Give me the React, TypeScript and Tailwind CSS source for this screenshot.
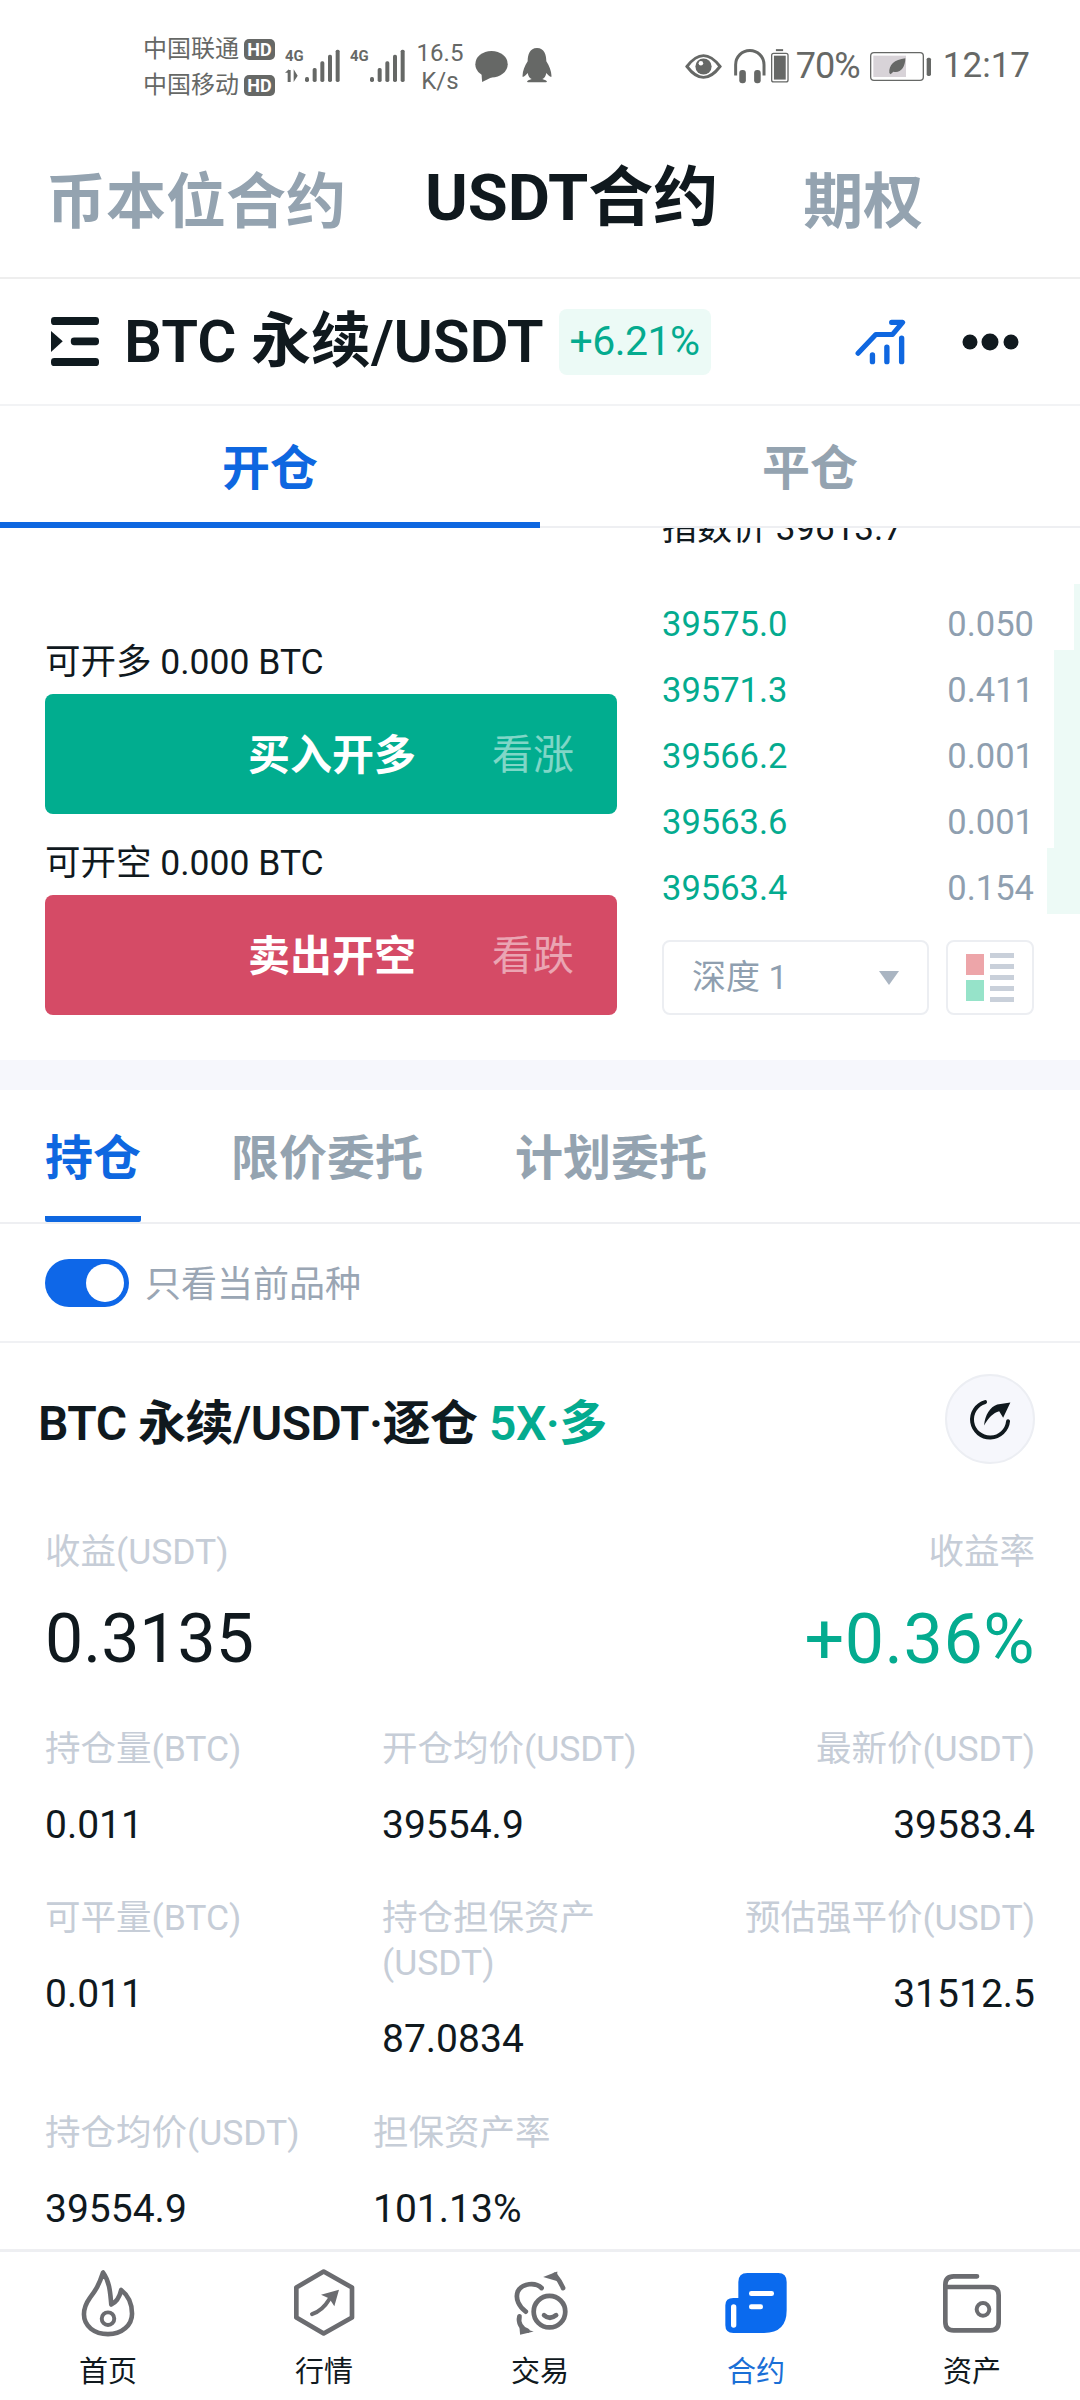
import * as React from "react";

const GREEN = "text-[#04ab8f]";

const orderRows = [
  { price: "39575.0", qty: "0.050", bar: "w-[6px]" },
  { price: "39571.3", qty: "0.411", bar: "w-[26px]" },
  { price: "39566.2", qty: "0.001", bar: "w-[26px]" },
  { price: "39563.6", qty: "0.001", bar: "w-[26px]" },
  { price: "39563.4", qty: "0.154", bar: "w-[33px]" },
];

function SignalBars({ x, dual }: { x: number; dual?: boolean }) {
  // drawn in 3x coordinates of the status bar
  const bars = [
    { dx: 0, h: 15 },
    { dx: 23, h: 42 },
    { dx: 46, h: 62 },
    { dx: 69, h: 82 },
    { dx: 92, h: 97 },
  ];
  return (
    <svg viewBox="0 0 165 105" className="w-[55px] h-[35px] shrink-0 fill-[#666866]">
      <text x="0" y="40" fontSize="46" fontWeight="700" textLength="56" lengthAdjust="spacingAndGlyphs" fontFamily="Roboto, sans-serif">
        4G
      </text>
      {dual && <path d="M8 66h9v36H8zM0 74l12-10v10zM26 64v38l12-19z" />}
      {bars.map((b) => (
        <rect key={b.dx} x={x + b.dx} y={102 - b.h} width="12" height={b.h} rx="5" />
      ))}
    </svg>
  );
}

function HdBadge() {
  return (
    <span className="w-[31px] h-[21px] rounded-[5px] bg-[#666866] text-white text-[18px] font-bold leading-[21px] text-center">
      HD
    </span>
  );
}

function StatusBar() {
  return (
    <div className="h-[120px] flex items-start pl-[143px] pr-[50px] pt-[30px] text-[#666866]">
      <div className="flex flex-col text-[24px] leading-[34px] gap-0">
        <div className="flex items-center gap-[5px] h-[38px]">
          中国联通 <HdBadge />
        </div>
        <div className="flex items-center gap-[5px] h-[34px]">
          中国移动 <HdBadge />
        </div>
      </div>
      <div className="ml-[10px] mt-[18px]">
        <SignalBars x={60} dual />
      </div>
      <div className="ml-[10px] mt-[18px]">
        <SignalBars x={60} />
      </div>
      <div className="ml-[13px] w-[44px] flex flex-col items-center text-[24px] leading-[28px] mt-[9px] whitespace-nowrap">
        <span>16.5</span>
        <span>K/s</span>
      </div>
      <svg viewBox="1065 90 105 100" className="ml-[13px] mt-[20px] w-[34px] h-[33px] fill-[#666866]">
        <ellipse cx="1116" cy="133" rx="50" ry="41" />
        <path d="M1085 160l2 28 36-18z" />
      </svg>
      <svg viewBox="1205 85 90 105" className="ml-[13px] mt-[18px] w-[30px] h-[35px] fill-[#666866]">
        <path d="M1250 85C1228 85 1222 105 1222 125C1212 140 1205 160 1207 172C1212 172 1218 165 1222 160C1224 170 1228 176 1234 178C1222 182 1215 186 1225 188L1275 188C1285 186 1278 182 1266 178C1272 176 1276 170 1278 160C1282 165 1288 172 1293 172C1295 160 1288 140 1278 125C1278 105 1272 85 1250 85Z" />
      </svg>

      <div className="ml-auto flex items-center h-[72px]">
        <svg viewBox="48 88 114 94" className="w-[37px] h-[31px]">
          <path d="M54 135Q105 68 156 135Q105 202 54 135Z" fill="none" stroke="#666866" strokeWidth="9" />
          <circle cx="105" cy="135" r="25" fill="#666866" />
          <circle cx="97" cy="125" r="7" fill="#fff" />
        </svg>
        <svg viewBox="190 85 100 105" className="ml-[11px] w-[33px] h-[35px]">
          <path d="M198 165V132A43 43 0 0 1 284 132V165" fill="none" stroke="#666866" strokeWidth="9" />
          <rect x="209" y="148" width="20" height="40" rx="9" fill="#666866" />
          <rect x="254" y="148" width="20" height="40" rx="9" fill="#666866" />
        </svg>
        <svg viewBox="305 85 55 103" className="ml-[5px] w-[18px] h-[34px]">
          <rect x="320" y="85" width="22" height="6" fill="#666866" />
          <rect x="307" y="98" width="50" height="87" rx="6" fill="none" stroke="#666866" strokeWidth="4" />
          <rect x="314" y="105" width="36" height="73" fill="#666866" />
        </svg>
        <span className="ml-[7px] text-[36px] leading-[40px] w-[64px] tracking-[-1px] whitespace-nowrap">70%</span>
        <svg viewBox="602 93 186 87" className="ml-[10px] w-[62px] h-[29px]">
          <rect x="604" y="95" width="158" height="83" rx="10" fill="none" stroke="#666866" strokeWidth="4" />
          <rect x="612" y="104" width="98" height="64" fill="#d8d3d8" />
          <path d="M660 156C658 132 675 116 708 112C708 140 692 158 672 152L664 160Z" fill="#666866" />
          <rect x="772" y="110" width="13" height="55" rx="5" fill="#666866" />
        </svg>
        <span className="ml-[11px] text-[35px] leading-[40px] whitespace-nowrap">12:17</span>
      </div>
    </div>
  );
}

function TopTabs() {
  return (
    <div className="h-[159px] border-b-2 border-[#eeeeee] flex items-center pl-[46px] pb-[2px] font-bold text-[60px] leading-[70px] text-[#94a3b0] whitespace-nowrap">
      <span className="mt-[10px]">币本位合约</span>
      <span className="ml-[79px] text-[#10191e] text-[65px] mt-[1px]">USDT合约</span>
      <span className="ml-[85px] mt-[10px]">期权</span>
    </div>
  );
}

function PairHeader() {
  return (
    <div className="h-[127px] border-b-2 border-[#f2f3f5] flex items-center pl-[51px] pr-[61px]">
      <svg viewBox="33 38 143 146" className="w-[48px] h-[49px] fill-[#0f1a1f]">
        <rect x="33" y="38" width="143" height="24" rx="10" />
        <rect x="92" y="99" width="84" height="23" rx="10" />
        <rect x="33" y="160" width="143" height="24" rx="10" />
        <path d="M33 80L68 110L33 142Z" />
      </svg>
      <span className="ml-[25px] text-[60px] leading-[70px] font-semibold text-[#10191e] whitespace-nowrap tracking-[-0.1px]">
        BTC 永续/USDT
      </span>
      <span className={`ml-[15px] w-[152px] h-[66px] rounded-[8px] bg-[#ecfaf6] flex items-center justify-center text-[41px] tracking-[-0.5px] ${GREEN}`}>
        +6.21%
      </span>
      <svg viewBox="30 25 155 140" className="ml-auto w-[52px] h-[47px] fill-none stroke-[#0f67e0]">
        <path d="M42 130L95 74H145L175 38H142" strokeWidth="15" strokeLinecap="round" strokeLinejoin="round" />
        <path d="M85 135V155M128 112V155M172 85V155" strokeWidth="16" strokeLinecap="round" />
      </svg>
      <svg viewBox="0 0 58 20" className="ml-[55px] w-[58px] h-[20px] fill-[#10191e]">
        <circle cx="9" cy="10" r="7.5" />
        <circle cx="29" cy="10" r="8.5" />
        <circle cx="50" cy="10" r="7.5" />
      </svg>
    </div>
  );
}

function OpenCloseTabs() {
  return (
    <div className="h-[122px] border-b-2 border-[#eeeff2] flex text-[48px] font-bold leading-[60px] relative">
      <div className="w-[540px] h-[122px] border-b-[6px] border-[#0e67e0] flex justify-center pt-[33px] text-[#0e67e0]">开仓</div>
      <div className="w-[540px] flex justify-center pt-[33px] text-[#94a3b0]">平仓</div>
    </div>
  );
}

function TradePanel() {
  return (
    <div className="h-[532px] flex overflow-hidden">
      <div className="w-[617px] pl-[45px]">
        <div className="mt-[112px] text-[35.5px] leading-[44px] text-[#10191e]">可开多 0.000 BTC</div>
        <div className="mt-[10px] h-[120px] rounded-[8px] bg-[#01ad8f] flex items-center pt-[3px] pl-[203px] text-white">
          <span className="text-[42px] font-bold">买入开多</span>
          <span className="ml-[76px] text-[41px] opacity-50">看涨</span>
        </div>
        <div className="mt-[27px] text-[35.5px] leading-[44px] text-[#10191e]">可开空 0.000 BTC</div>
        <div className="mt-[10px] h-[120px] rounded-[8px] bg-[#d54b66] flex items-center pt-[3px] pl-[203px] text-white">
          <span className="text-[42px] font-bold">卖出开空</span>
          <span className="ml-[76px] text-[41px] opacity-50">看跌</span>
        </div>
      </div>
      <div className="ml-[45px] w-[372px]">
        <div className="h-[18px] overflow-hidden">
          <div className="-mt-[17px] text-[35px] leading-[36px] text-[#10191e] whitespace-nowrap">指数价 39613.7</div>
        </div>
        <div className="mt-[46px]">
          {orderRows.map((r) => (
            <div key={r.price} className="relative h-[66px] flex items-center justify-between text-[34.5px]">
              <div className={`absolute -right-[46px] -top-[8px] h-[66px] bg-[#edfaf6] ${r.bar}`} />
              <span className={`relative ${GREEN}`}>{r.price}</span>
              <span className="relative text-[#8f9fb0]">{r.qty}</span>
            </div>
          ))}
        </div>
        <div className="mt-[18px] flex gap-[17px]">
          <div className="w-[267px] h-[75px] rounded-[8px] border-2 border-[#eceef2] flex items-center pl-[28px] pr-[28px] text-[34px] text-[#8f9fb0]">
            <span>深度 1</span>
            <span className="ml-auto w-0 h-0 border-x-[10px] border-x-transparent border-t-[14px] border-t-[#aab5c2]" />
          </div>
          <div className="w-[88px] h-[75px] rounded-[8px] border-2 border-[#eceef2] flex items-center pl-[18px] gap-[6px]">
            <div className="flex flex-col gap-[5px]">
              <div className="w-[18px] h-[21px] bg-[#eda5a9]" />
              <div className="w-[18px] h-[21px] bg-[#96e3c9]" />
            </div>
            <div className="flex flex-col gap-[6px]">
              <div className="w-[24px] h-[5px] bg-[#c9d0da]" />
              <div className="w-[24px] h-[5px] bg-[#c9d0da]" />
              <div className="w-[24px] h-[5px] bg-[#c9d0da]" />
              <div className="w-[24px] h-[5px] bg-[#c9d0da]" />
              <div className="w-[24px] h-[5px] bg-[#c9d0da]" />
            </div>
          </div>
        </div>
      </div>
    </div>
  );
}

function OrderTabs() {
  return (
    <div className="h-[134px] border-b-2 border-[#eeeff2] flex pl-[45px] text-[48px] font-bold leading-[60px] text-[#94a3b0]">
      <div className="w-[96px] h-[132px] border-b-[6px] border-[#0e67e0] rounded-b-[2px] pt-[39px] text-[#0e67e0]">持仓</div>
      <div className="ml-[90px] pt-[39px]">限价委托</div>
      <div className="ml-[92px] pt-[39px]">计划委托</div>
    </div>
  );
}

function Stat({ label, value, className }: { label: React.ReactNode; value: string; className: string }) {
  return (
    <div className={className}>
      <div className="text-[35.5px] leading-[45px] text-[#c6cdd7]">{label}</div>
      <div className="mt-[30px] text-[39px] leading-[46px] text-[#10191e]">{value}</div>
    </div>
  );
}

function PositionCard() {
  return (
    <div className="px-[45px]">
      <div className="-ml-[7px] h-[120px] pt-[31px] flex justify-between items-start">
        <div className="mt-[20px] text-[48px] leading-[60px] font-semibold text-[#10191e] whitespace-nowrap tracking-[-0.5px]">
          BTC 永续/USDT·逐仓 <span className={GREEN}>5X·多</span>
        </div>
        <div className="w-[90px] h-[90px] rounded-full border-2 border-[#eceef3] bg-[#f6f7fc] flex items-center justify-center">
          <svg viewBox="80 85 140 130" className="w-[46px] h-[43px]">
            <path d="M135 97A55 55 0 1 0 205 155" fill="none" stroke="#10191e" strokeWidth="12" strokeLinecap="round" />
            <path d="M132 168C135 135 150 112 172 104L212 98L190 145L178 125C160 130 145 145 132 168Z" fill="#10191e" />
          </svg>
        </div>
      </div>

      <div className="mt-[67px] flex justify-between text-[35.5px] leading-[44px] text-[#c6cdd7]">
        <span>收益(USDT)</span>
        <span>收益率</span>
      </div>
      <div className="mt-[25px] flex justify-between items-center text-[68px] leading-[80px]">
        <span className="text-[#10191e]">0.3135</span>
        <span className={`text-[70px] tracking-[0.5px] ${GREEN}`}>+0.36%</span>
      </div>

      <div className="mt-[48px] flex">
        <Stat className="w-[337px]" label="持仓量(BTC)" value="0.011" />
        <Stat className="w-[240px] whitespace-nowrap" label="开仓均价(USDT)" value="39554.9" />
        <Stat className="flex-1 text-right" label="最新价(USDT)" value="39583.4" />
      </div>
      <div className="mt-[48px] flex">
        <Stat className="w-[337px]" label="可平量(BTC)" value="0.011" />
        <Stat className="w-[240px]" label="持仓担保资产(USDT)" value="87.0834" />
        <Stat className="flex-1 text-right whitespace-nowrap" label="预估强平价(USDT)" value="31512.5" />
      </div>
      <div className="mt-[49px] flex">
        <Stat className="w-[328px]" label="持仓均价(USDT)" value="39554.9" />
        <Stat className="w-[240px]" label="担保资产率" value="101.13%" />
      </div>
    </div>
  );
}

const navItems = [
  {
    label: "首页",
    icon: (
      <svg viewBox="148 55 170 205" className="w-[56px] h-[68px] fill-none stroke-[#6b6c70]" strokeWidth="14" strokeLinejoin="round">
        <path d="M218 65C205 105 195 120 178 142C165 160 160 175 160 192C160 228 192 252 233 252C275 252 306 225 306 190C306 160 295 135 273 118C268 140 258 155 243 162C240 135 240 95 218 65Z" />
        <circle cx="233" cy="205" r="19" strokeWidth="12" />
      </svg>
    ),
  },
  {
    label: "行情",
    icon: (
      <svg viewBox="788 55 186 200" className="w-[62px] h-[67px] fill-none stroke-[#6b6c70]" strokeWidth="14" strokeLinejoin="round">
        <path d="M880 62L965 110V200L880 248L798 200V110Z" />
        <path d="M845 190C868 182 885 165 897 145" strokeWidth="12" strokeLinecap="round" />
        <path d="M872 132L926 117L912 166L897 143Z" fill="#6b6c70" stroke="none" />
      </svg>
    ),
  },
  {
    label: "交易",
    icon: (
      <svg viewBox="30 20 190 215" className="w-[60px] h-[68px] fill-none stroke-[#6b6c70]" strokeWidth="15" strokeLinecap="round">
        <circle cx="155" cy="155" r="50" />
        <path d="M138 166Q156 182 176 166" />
        <path d="M130 80C110 60 70 65 55 90C45 115 60 140 80 155" />
        <path d="M60 170C55 190 65 208 85 215" />
        <path d="M60 205L105 218L62 228Z" fill="#6b6c70" stroke="none" />
        <path d="M172 38C182 50 192 65 198 80" />
        <path d="M135 45L180 28L178 58Z" fill="#6b6c70" stroke="none" />
      </svg>
    ),
  },
  {
    label: "合约",
    active: true,
    icon: (
      <svg viewBox="555 68 186 180" className="w-[62px] h-[60px] mt-[4px]">
        <path d="M595 95Q595 68 622 68H715Q740 68 740 95V180Q740 248 672 248H580Q556 248 556 225V165Q556 143 580 143H595Z" fill="#0a6aee" />
        <rect x="627" y="122" width="75" height="15" rx="7" fill="#fff" />
        <rect x="627" y="162" width="42" height="15" rx="7" fill="#fff" />
        <rect x="573" y="162" width="16" height="70" rx="8" fill="#fff" />
      </svg>
    ),
  },
  {
    label: "资产",
    icon: (
      <svg viewBox="1205 68 180 180" className="w-[60px] h-[60px] mt-[4px] fill-none stroke-[#6b6c70]" strokeWidth="14" strokeLinecap="round">
        <path d="M1310 78H1240Q1215 78 1215 103V215Q1215 240 1240 240H1350Q1375 240 1375 215V135Q1375 110 1350 110H1215" />
        <circle cx="1328" cy="177" r="19" strokeWidth="12" />
      </svg>
    ),
  },
];

function BottomNav() {
  return (
    <div className="mt-auto h-[151px] border-t-[3px] border-[#eeeff2] flex">
      {navItems.map((item) => (
        <div key={item.label} className="flex-1 flex flex-col items-center pt-[17px]">
          <div className="h-[67px] flex items-start justify-center">{item.icon}</div>
          <div className={`mt-[16px] text-[29px] leading-[40px] ${item.active ? "text-[#1a6fd6]" : "text-[#10191e]"}`}>{item.label}</div>
        </div>
      ))}
    </div>
  );
}

export default function App() {
  return (
    <div className="w-[1080px] h-[2400px] bg-white overflow-hidden flex flex-col [font-family:Roboto,'Noto_Sans_CJK_SC',sans-serif]">
      <StatusBar />
      <TopTabs />
      <PairHeader />
      <OpenCloseTabs />
      <TradePanel />
      <div className="h-[30px] bg-[#f6f7fc]" />
      <OrderTabs />
      <div className="h-[119px] border-b-2 border-[#f0f1f4] flex items-center pl-[45px]">
        <div className="w-[84px] h-[48px] rounded-full bg-[#0e67e8] flex items-center justify-end pr-[5px]">
          <div className="w-[38px] h-[38px] rounded-full bg-white" />
        </div>
        <span className="ml-[16px] mt-[4px] text-[36px] text-[#9aa6b4]">只看当前品种</span>
      </div>
      <PositionCard />
      <BottomNav />
    </div>
  );
}
